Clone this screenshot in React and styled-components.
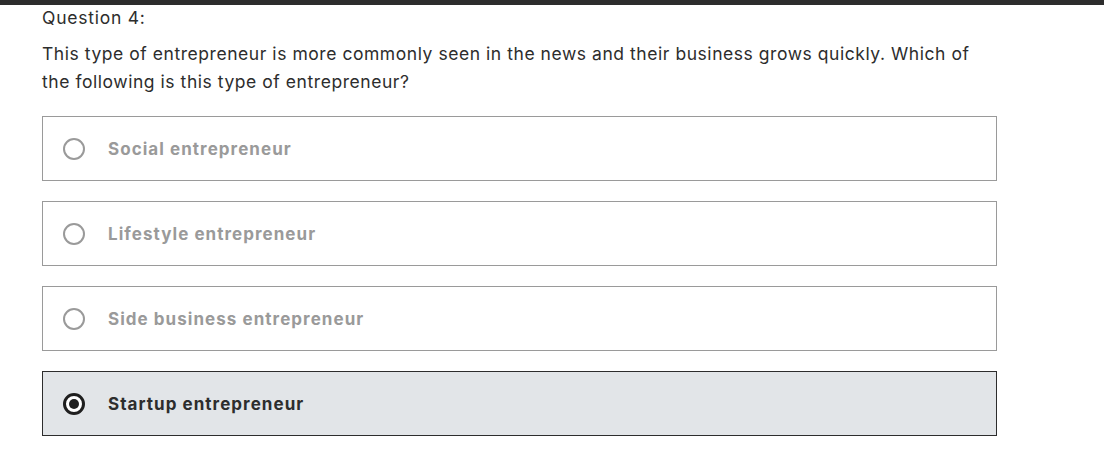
import React, { useState } from "react";
import styled, { createGlobalStyle } from "styled-components";

const GlobalStyle = createGlobalStyle`
  body {
    margin: 0;
    background: #fff;
    font-family: "Inter", "Liberation Sans", sans-serif;
    color: #2d2d2d;
  }
`;

const TopBar = styled.div`
  height: 5px;
  background-color: #2d2d2d;
`;

const Quiz = styled.div`
  padding: 0 107px 0 42px;
`;

const QuestionLabel = styled.div`
  font-size: 17.5px;
  line-height: 24px;
  letter-spacing: 0.75px;
  margin-top: 1px;
`;

const Prompt = styled.p`
  font-size: 17.5px;
  line-height: 28px;
  letter-spacing: 0.55px;
  margin: 10px 0 20px;
  max-width: 940px;
`;

const Options = styled.div`
  display: flex;
  flex-direction: column;
  gap: 20px;
`;

const Option = styled.label`
  display: flex;
  align-items: center;
  height: 65px;
  box-sizing: border-box;
  padding-left: 20px;
  border: 1px solid ${(p) => (p.selected ? "#2d2d2d" : "#9a9a9a")};
  background-color: ${(p) => (p.selected ? "#e2e5e8" : "#fff")};
  cursor: pointer;
`;

const Radio = styled.span`
  width: 22px;
  height: 22px;
  box-sizing: border-box;
  border-radius: 50%;
  border: ${(p) => (p.selected ? "3px solid #1f1f1f" : "2px solid #9a9a9a")};
  background: #fff;
  display: flex;
  align-items: center;
  justify-content: center;
  margin-right: 23px;
  &::after {
    content: "";
    display: ${(p) => (p.selected ? "block" : "none")};
    width: 10px;
    height: 10px;
    border-radius: 50%;
    background: #1f1f1f;
  }
`;

const OptionText = styled.span`
  font-size: 17px;
  font-weight: 700;
  letter-spacing: 1.05px;
  color: ${(p) => (p.selected ? "#2d2d2d" : "#9a9a9a")};
`;

const answers = [
  "Social entrepreneur",
  "Lifestyle entrepreneur",
  "Side business entrepreneur",
  "Startup entrepreneur",
];

export default function App() {
  const [picked, setPicked] = useState(3);
  return (
    <>
      <GlobalStyle />
      <TopBar />
      <Quiz>
        <QuestionLabel>Question 4:</QuestionLabel>
        <Prompt>
          This type of entrepreneur is more commonly seen in the news and their
          business grows quickly. Which of the following is this type of
          entrepreneur?
        </Prompt>
        <Options>
          {answers.map((a, i) => (
            <Option key={a} selected={i === picked} onClick={() => setPicked(i)}>
              <Radio selected={i === picked} />
              <OptionText selected={i === picked}>{a}</OptionText>
            </Option>
          ))}
        </Options>
      </Quiz>
    </>
  );
}
